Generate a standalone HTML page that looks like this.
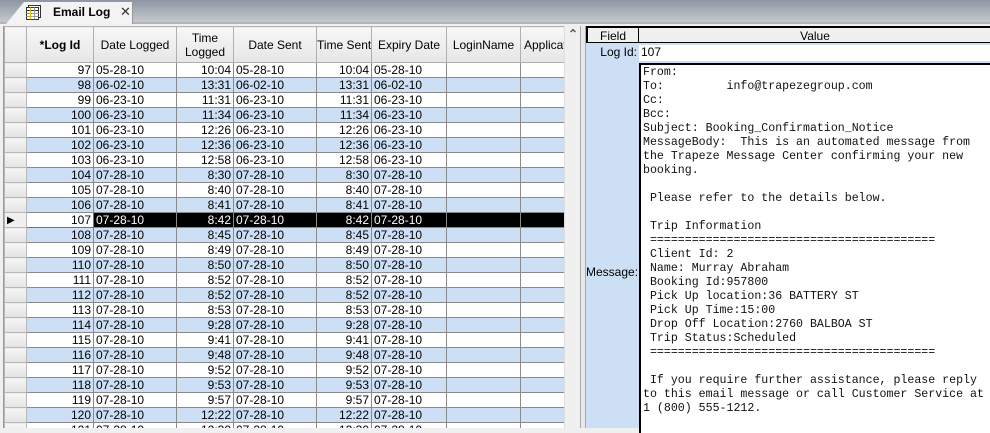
<!DOCTYPE html>
<html><head><meta charset="utf-8"><style>
*{box-sizing:border-box;margin:0;padding:0}
body{width:990px;height:428px;overflow:hidden;background:#f0f0f0;font-family:"Liberation Sans",Arial,sans-serif;font-size:12px;color:#000;position:relative}
#bar{position:absolute;left:0;top:0;width:990px;height:23px;background:linear-gradient(#8d96a2,#c8cbd1)}
#barline{position:absolute;left:0;top:22px;width:990px;height:2px;background:#b5b5b5}
#tab{position:absolute;left:6px;top:2px;width:127px;height:22px;background:#f3f3f3;clip-path:polygon(0 100%,18px 0,100% 0,100% 100%);border-right:1px solid #999}
#tab .t{position:absolute;left:47px;top:3px;font-weight:bold;font-size:12px}
#tab .x{position:absolute;left:114px;top:2px;font-size:13px;color:#333}
#grid{position:absolute;left:3px;top:26px;width:561px;height:402px;overflow:hidden;border-left:1px solid #999}
table{border-collapse:collapse;table-layout:fixed}
#g td,#g th{border:1px solid #8a8a8a;height:15px;padding:0 2px;white-space:nowrap;overflow:hidden;font-size:12px;line-height:13px}
#g th{height:36px;padding:0;background:linear-gradient(#f7f7f7,#e6e6e6);font-weight:normal;border-color:#b0b0b0;text-align:center;line-height:14px}
#g th.b{font-weight:bold}
#g td.r{text-align:right}
#g td.h{background:linear-gradient(#f6f6f6,#e3e3e3);border-color:#b8b8b8}
#g tr.w td{background:#fff}
#g tr.bl td{background:#cddff5}
#g tr.s td{background:#000;color:#fff}
#g tr td.h{background:linear-gradient(#f6f6f6,#e3e3e3)}
#g tr.s td.h{background:#f0f0f0;color:#000}
#g tr.s td.f{background:#fff;color:#000;border:1px solid #3a7bd5}
#sb{position:absolute;left:564px;top:26px;width:16px;height:402px;background:#f0f0f0;border-left:1px solid #ddd}
#sb span{position:absolute;left:3px;top:1px;font-size:12px;font-weight:bold;color:#555}
#split{position:absolute;left:580px;top:26px;width:6px;height:402px;background:#e8e8e8;border-left:1px solid #aaa;border-right:1px solid #aaa}
#rp{position:absolute;left:586px;top:26px;width:404px;height:402px;background:#cddff5}
#rh{position:absolute;left:0;top:0;width:404px;height:17px;background:#f0f0f0;border:2px solid #000;border-right:none;border-bottom:1px solid #000}
#rh div{position:absolute;top:1px;text-align:center}
#lid{position:absolute;left:0;top:19px;width:53px;text-align:right;padding-right:2px;line-height:15px}
#lidv{position:absolute;left:53px;top:19px;width:351px;height:16px;background:#fff;padding-left:2px;line-height:15px}
#ml{position:absolute;left:0;top:239px;width:53px;text-align:right;padding-right:1px}
#msg{position:absolute;left:53px;top:37px;width:351px;height:370px;background:#fff;border-left:2px solid #000;border-top:2px solid #000}
pre{position:absolute;left:2px;top:1px;font-family:"Liberation Mono","Courier New",monospace;font-size:11.6px;line-height:14px;color:#111}
</style></head><body>
<div id="bar"></div><div id="barline"></div>
<div id="tab">
<svg style="position:absolute;left:20px;top:3px" width="16" height="15" viewBox="0 0 16 15"><rect x="2.5" y="0.5" width="12" height="12" fill="#fff" stroke="#333"/><rect x="0.5" y="2.5" width="12" height="12" fill="#fff" stroke="#333"/><line x1="0.5" y1="5.5" x2="12.5" y2="5.5" stroke="#333"/><line x1="0.5" y1="8.5" x2="12.5" y2="8.5" stroke="#999"/><line x1="0.5" y1="11.5" x2="12.5" y2="11.5" stroke="#999"/><line x1="4.5" y1="2.5" x2="4.5" y2="14.5" stroke="#e0c000"/><line x1="8.5" y1="2.5" x2="8.5" y2="14.5" stroke="#999"/></svg>
<span class="t">Email Log</span><span class="x">✕</span></div>

<div id="grid"><table id="g" style="width:600px">
<colgroup><col style="width:22px"><col style="width:67px"><col style="width:83px"><col style="width:57px"><col style="width:83px"><col style="width:55px"><col style="width:75px"><col style="width:74px"><col style="width:84px"></colgroup>
<tr><th></th><th class="b">*Log Id</th><th>Date Logged</th><th>Time<br>Logged</th><th>Date Sent</th><th>Time Sent</th><th>Expiry Date</th><th>LoginName</th><th style="text-align:left;padding-left:3px">Applicat</th></tr>
<tr class="w"><td class="h"></td><td class="r">97</td><td>05-28-10</td><td class="r">10:04</td><td>05-28-10</td><td class="r">10:04</td><td>05-28-10</td><td></td><td></td></tr>
<tr class="bl"><td class="h"></td><td class="r">98</td><td>06-02-10</td><td class="r">13:31</td><td>06-02-10</td><td class="r">13:31</td><td>06-02-10</td><td></td><td></td></tr>
<tr class="w"><td class="h"></td><td class="r">99</td><td>06-23-10</td><td class="r">11:31</td><td>06-23-10</td><td class="r">11:31</td><td>06-23-10</td><td></td><td></td></tr>
<tr class="bl"><td class="h"></td><td class="r">100</td><td>06-23-10</td><td class="r">11:34</td><td>06-23-10</td><td class="r">11:34</td><td>06-23-10</td><td></td><td></td></tr>
<tr class="w"><td class="h"></td><td class="r">101</td><td>06-23-10</td><td class="r">12:26</td><td>06-23-10</td><td class="r">12:26</td><td>06-23-10</td><td></td><td></td></tr>
<tr class="bl"><td class="h"></td><td class="r">102</td><td>06-23-10</td><td class="r">12:36</td><td>06-23-10</td><td class="r">12:36</td><td>06-23-10</td><td></td><td></td></tr>
<tr class="w"><td class="h"></td><td class="r">103</td><td>06-23-10</td><td class="r">12:58</td><td>06-23-10</td><td class="r">12:58</td><td>06-23-10</td><td></td><td></td></tr>
<tr class="bl"><td class="h"></td><td class="r">104</td><td>07-28-10</td><td class="r">8:30</td><td>07-28-10</td><td class="r">8:30</td><td>07-28-10</td><td></td><td></td></tr>
<tr class="w"><td class="h"></td><td class="r">105</td><td>07-28-10</td><td class="r">8:40</td><td>07-28-10</td><td class="r">8:40</td><td>07-28-10</td><td></td><td></td></tr>
<tr class="bl"><td class="h"></td><td class="r">106</td><td>07-28-10</td><td class="r">8:41</td><td>07-28-10</td><td class="r">8:41</td><td>07-28-10</td><td></td><td></td></tr>
<tr class="s"><td class="h" style="font-size:10px">&#9654;</td><td class="r f">107</td><td>07-28-10</td><td class="r">8:42</td><td>07-28-10</td><td class="r">8:42</td><td>07-28-10</td><td></td><td></td></tr>
<tr class="bl"><td class="h"></td><td class="r">108</td><td>07-28-10</td><td class="r">8:45</td><td>07-28-10</td><td class="r">8:45</td><td>07-28-10</td><td></td><td></td></tr>
<tr class="w"><td class="h"></td><td class="r">109</td><td>07-28-10</td><td class="r">8:49</td><td>07-28-10</td><td class="r">8:49</td><td>07-28-10</td><td></td><td></td></tr>
<tr class="bl"><td class="h"></td><td class="r">110</td><td>07-28-10</td><td class="r">8:50</td><td>07-28-10</td><td class="r">8:50</td><td>07-28-10</td><td></td><td></td></tr>
<tr class="w"><td class="h"></td><td class="r">111</td><td>07-28-10</td><td class="r">8:52</td><td>07-28-10</td><td class="r">8:52</td><td>07-28-10</td><td></td><td></td></tr>
<tr class="bl"><td class="h"></td><td class="r">112</td><td>07-28-10</td><td class="r">8:52</td><td>07-28-10</td><td class="r">8:52</td><td>07-28-10</td><td></td><td></td></tr>
<tr class="w"><td class="h"></td><td class="r">113</td><td>07-28-10</td><td class="r">8:53</td><td>07-28-10</td><td class="r">8:53</td><td>07-28-10</td><td></td><td></td></tr>
<tr class="bl"><td class="h"></td><td class="r">114</td><td>07-28-10</td><td class="r">9:28</td><td>07-28-10</td><td class="r">9:28</td><td>07-28-10</td><td></td><td></td></tr>
<tr class="w"><td class="h"></td><td class="r">115</td><td>07-28-10</td><td class="r">9:41</td><td>07-28-10</td><td class="r">9:41</td><td>07-28-10</td><td></td><td></td></tr>
<tr class="bl"><td class="h"></td><td class="r">116</td><td>07-28-10</td><td class="r">9:48</td><td>07-28-10</td><td class="r">9:48</td><td>07-28-10</td><td></td><td></td></tr>
<tr class="w"><td class="h"></td><td class="r">117</td><td>07-28-10</td><td class="r">9:52</td><td>07-28-10</td><td class="r">9:52</td><td>07-28-10</td><td></td><td></td></tr>
<tr class="bl"><td class="h"></td><td class="r">118</td><td>07-28-10</td><td class="r">9:53</td><td>07-28-10</td><td class="r">9:53</td><td>07-28-10</td><td></td><td></td></tr>
<tr class="w"><td class="h"></td><td class="r">119</td><td>07-28-10</td><td class="r">9:57</td><td>07-28-10</td><td class="r">9:57</td><td>07-28-10</td><td></td><td></td></tr>
<tr class="bl"><td class="h"></td><td class="r">120</td><td>07-28-10</td><td class="r">12:22</td><td>07-28-10</td><td class="r">12:22</td><td>07-28-10</td><td></td><td></td></tr>
<tr class="w"><td class="h"></td><td class="r">121</td><td>07-28-10</td><td class="r">12:30</td><td>07-28-10</td><td class="r">12:30</td><td>07-28-10</td><td></td><td></td></tr>
</table></div>
<div id="sb"><span>&#8963;</span></div>
<div id="split"></div>
<div id="rp">
<div id="rh"><div style="left:0;width:51px;border-right:1px solid #000;height:15px;top:0;padding-top:1px">Field</div><div style="left:52px;width:350px">Value</div></div>
<div id="lid">Log Id:</div><div id="lidv">107</div>
<div id="ml">Message:</div>
<div id="msg"><pre>From:
To:         info@trapezegroup.com
Cc:
Bcc:
Subject: Booking_Confirmation_Notice
MessageBody:  This is an automated message from
the Trapeze Message Center confirming your new
booking.

 Please refer to the details below.

 Trip Information
 =========================================
 Client Id: 2
 Name: Murray Abraham
 Booking Id:957800
 Pick Up location:36 BATTERY ST
 Pick Up Time:15:00
 Drop Off Location:2760 BALBOA ST
 Trip Status:Scheduled
 =========================================

 If you require further assistance, please reply
to this email message or call Customer Service at
1 (800) 555-1212.</pre></div>
</div>
</body></html>
